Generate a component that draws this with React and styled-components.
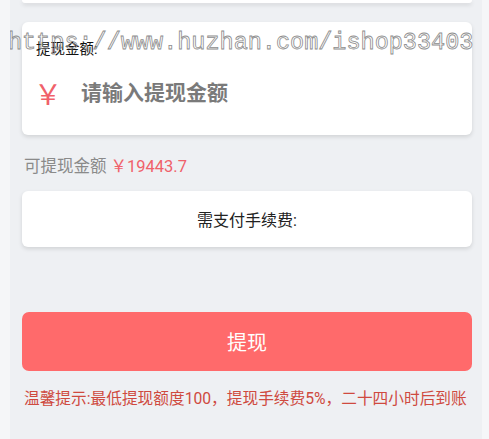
import React, { useState } from "react";
import styled, { createGlobalStyle } from "styled-components";

const GlobalStyle = createGlobalStyle`
  html, body {
    margin: 0;
    padding: 0;
    background: #f5f6f8;
    font-family: Roboto, "Noto Sans CJK SC", sans-serif;
  }
`;

const Page = styled.div`
  position: relative;
  margin: 0 7px 0 10px;
  min-height: 439px;
  background: #eef0f3;
  padding: 0 10px 0 12px;
  box-sizing: border-box;
  display: flex;
  flex-direction: column;
  overflow: hidden;
`;

const Card = styled.div`
  background: #fff;
  border-radius: 6px;
  box-shadow: 0 2px 4px rgba(0, 0, 0, 0.12);
`;

const PrevCard = styled(Card)`
  height: 3px;
  border-radius: 0 0 6px 6px;
`;

const AmountCard = styled(Card)`
  margin-top: 19px;
  height: 113px;
  box-sizing: border-box;
  padding: 18px 14px 0 14px;
`;

const Label = styled.div`
  font-size: 14.5px;
  color: #111;
  line-height: 20px;
`;

const InputRow = styled.div`
  display: flex;
  align-items: center;
  margin-top: 17px;
  height: 32px;
`;

const Yen = styled.span`
  width: 47px;
  font-family: "Noto Sans CJK SC", sans-serif;
  font-size: 28px;
  font-weight: 400;
  color: #f0616a;
  margin-left: -2px;
`;

const AmountInput = styled.input`
  flex: 1;
  border: none;
  outline: none;
  background: transparent;
  font-family: inherit;
  font-size: 21px;
  font-weight: 600;
  color: #333;
  padding: 0;
  &::placeholder {
    color: #7a7a7a;
  }
`;

const Balance = styled.div`
  margin-top: 21px;
  padding-left: 2px;
  font-size: 16.5px;
  line-height: 22px;
  color: #8a8a8a;
  span {
    color: #f0616a;
    margin-left: 4px;
  }
`;

const FeeCard = styled(Card)`
  margin-top: 13px;
  height: 56px;
  display: flex;
  align-items: center;
  justify-content: center;
  font-size: 16px;
  color: #222;
`;

const SubmitButton = styled.button`
  margin-top: 65px;
  height: 59px;
  border: none;
  border-radius: 7px;
  background: #ff6a6b;
  color: #fff;
  font-family: inherit;
  font-size: 20px;
  cursor: pointer;
`;

const Tip = styled.div`
  margin-top: 17px;
  padding-left: 2px;
  font-size: 15.7px;
  line-height: 22px;
  color: #cf4a3f;
  white-space: nowrap;
`;

const Watermark = styled.div`
  position: absolute;
  left: -2px;
  top: 30px;
  font-family: "Liberation Mono", monospace;
  font-size: 23.5px;
  line-height: 26px;
  color: transparent;
  -webkit-text-stroke: 0.8px #8c8c8c;
  white-space: nowrap;
  pointer-events: none;
`;

export default function App() {
  const [amount, setAmount] = useState("");

  return (
    <>
      <GlobalStyle />
      <Page>
        <PrevCard />
        <AmountCard>
          <Label>提现金额:</Label>
          <InputRow>
            <Yen>￥</Yen>
            <AmountInput
              value={amount}
              onChange={(e) => setAmount(e.target.value)}
              placeholder="请输入提现金额"
            />
          </InputRow>
        </AmountCard>
        <Balance>
          可提现金额<span>￥19443.7</span>
        </Balance>
        <FeeCard>需支付手续费:</FeeCard>
        <SubmitButton>提现</SubmitButton>
        <Tip>温馨提示:最低提现额度100，提现手续费5%，二十四小时后到账</Tip>
        <Watermark>https://www.huzhan.com/ishop33403</Watermark>
      </Page>
    </>
  );
}
